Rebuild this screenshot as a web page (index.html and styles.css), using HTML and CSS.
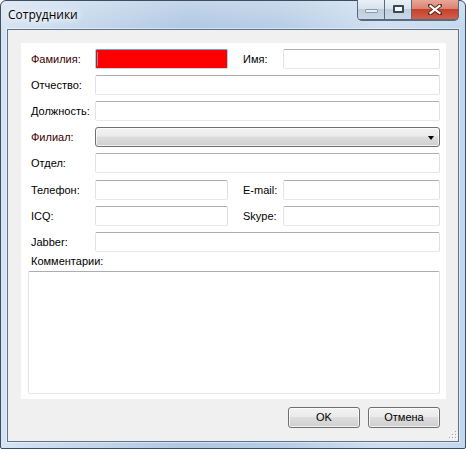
FILE: index.html
```html
<!DOCTYPE html>
<html lang="ru">
<head>
<meta charset="utf-8">
<title>Сотрудники</title>
<link rel="stylesheet" href="styles.css">
</head>
<body>
<div class="window">
  <div class="titlebar">
    <span class="title">Сотрудники</span>
    <div class="caption">
      <span class="cb min"><i class="min-glyph"></i></span>
      <span class="cb max"><i class="max-glyph"></i></span>
      <span class="cb close">
        <svg width="14" height="11" viewBox="0 0 14 11"><path d="M2 1.5 L12 9.5 M12 1.5 L2 9.5" stroke="#5a2a22" stroke-width="4" stroke-linecap="square"/><path d="M2.5 2 L11.5 9 M11.5 2 L2.5 9" stroke="#ffffff" stroke-width="2.2" stroke-linecap="square"/></svg>
      </span>
    </div>
  </div>
  <div class="client">
    <div class="panel">
      <div class="form">
        <span class="lbl req">Фамилия:</span>
        <div class="field focus"><i class="caret"></i></div>
        <span class="lbl2">Имя:</span>
        <div class="field"></div>

        <span class="lbl">Отчество:</span>
        <div class="field full"></div>

        <span class="lbl">Должность:</span>
        <div class="field full"></div>

        <span class="lbl req">Филиал:</span>
        <div class="combo full"><i class="arrow"></i></div>

        <span class="lbl">Отдел:</span>
        <div class="field full"></div>

        <span class="lbl">Телефон:</span>
        <div class="field"></div>
        <span class="lbl2">E-mail:</span>
        <div class="field"></div>

        <span class="lbl">ICQ:</span>
        <div class="field"></div>
        <span class="lbl2">Skype:</span>
        <div class="field"></div>

        <span class="lbl">Jabber:</span>
        <div class="field full"></div>
      </div>
      <div class="comment-label">Комментарии:</div>
      <div class="field comment"></div>
    </div>
    <div class="buttons">
      <button class="btn">OK</button>
      <button class="btn">Отмена</button>
    </div>
    <svg class="grip" width="8" height="8" viewBox="0 0 8 8">
      <rect x="6" y="0" width="1" height="1" fill="#a0a0a0"/>
      <rect x="3" y="3" width="1" height="1" fill="#a0a0a0"/>
      <rect x="6" y="3" width="1" height="1" fill="#a0a0a0"/>
      <rect x="0" y="6" width="1" height="1" fill="#a0a0a0"/>
      <rect x="3" y="6" width="1" height="1" fill="#a0a0a0"/>
      <rect x="6" y="6" width="1" height="1" fill="#a0a0a0"/>
      <rect x="7" y="1" width="1" height="1" fill="#ffffff"/>
      <rect x="4" y="4" width="1" height="1" fill="#ffffff"/>
      <rect x="7" y="4" width="1" height="1" fill="#ffffff"/>
      <rect x="1" y="7" width="1" height="1" fill="#ffffff"/>
      <rect x="4" y="7" width="1" height="1" fill="#ffffff"/>
      <rect x="7" y="7" width="1" height="1" fill="#ffffff"/>
    </svg>
  </div>
</div>
</body>
</html>
```

FILE: styles.css
```css
html, body {
  margin: 0;
  padding: 0;
  background: #ffffff;
}

.window {
  width: 466px;
  height: 449px;
  box-sizing: border-box;
  border: 1px solid #3e4d5f;
  border-radius: 6px 6px 2px 2px;
  padding: 0 6px 6px;
  display: flex;
  flex-direction: column;
  background:
    linear-gradient(180deg, rgba(255,255,255,0.25) 0, rgba(255,255,255,0) 28px),
    linear-gradient(90deg, #d6e4f3 0%, #c8daee 14%, #b0c8e3 40%, #b6cde6 60%, #cfdff1 82%, #c3d7ed 100%);
  font-family: "Liberation Sans", Arial, sans-serif;
  font-size: 11px;
  color: #000;
}

.titlebar {
  height: 28px;
  display: flex;
  align-items: flex-start;
}

.title {
  margin-top: 6px;
  padding-left: 1px;
  font-family: "Open Sans", "Noto Sans", sans-serif;
  font-size: 12px;
  line-height: 16px;
  color: #000;
  text-shadow: 0 0 6px #ffffff, 0 0 10px #ffffff, 0 0 14px rgba(255,255,255,0.9);
}

.caption {
  margin-left: auto;
  margin-top: -1px;
  height: 20px;
  display: flex;
  border: 1px solid #5a6a7e;
  border-top: none;
  border-radius: 0 0 5px 5px;
  overflow: hidden;
  background: #5a6a7e;
  gap: 1px;
}

.cb {
  height: 19px;
  display: flex;
  align-items: center;
  justify-content: center;
}

.min, .max {
  width: 26px;
  background: linear-gradient(180deg, #e9eff6 0%, #d9e3ee 45%, #bfcddc 50%, #c9d7e7 100%);
}

.close {
  width: 46px;
  background: linear-gradient(180deg, #e9a797 0%, #d98471 45%, #c6412c 50%, #d0604a 100%);
}

.min-glyph {
  display: block;
  width: 11px;
  height: 2px;
  margin-top: 3px;
  background: #e8eef5;
  border: 1px solid #8a9aab;
  border-radius: 1px;
}

.max-glyph {
  display: block;
  width: 7px;
  height: 4px;
  margin-top: -2px;
  background: #f4f7fb;
  border: 2px solid #3b4654;
  border-top-width: 2px;
  border-radius: 1px;
}

.client {
  flex: 1;
  position: relative;
  border: 1px solid #60728a;
  background: #f0f0f0;
  display: flex;
  flex-direction: column;
  box-shadow: 0 0 0 1px rgba(255,255,255,0.45);
}

.panel {
  margin: 13px 12px 0 13px;
  height: 356px;
  box-sizing: border-box;
  padding: 6px 0 5px 0;
  background: #ffffff;
}

.form {
  display: grid;
  grid-template-columns: 64px 133px 55px 157px;
  grid-template-rows: 20px 20px 20px 20px 21px 20px 20px 20px;
  row-gap: 6px;
  padding-left: 10px;
  align-items: center;
}

.lbl {
  grid-column: 1;
  white-space: nowrap;
  line-height: 13px;
}

.lbl.req {
  color: #3c0000;
}

.lbl2 {
  padding-left: 15px;
  white-space: nowrap;
  line-height: 13px;
}

.field {
  position: relative;
  height: 20px;
  box-sizing: border-box;
  align-self: start;
  border: 1px solid;
  border-color: #abadb3 #dbdfe6 #e3e9ef #e2e3ea;
  border-radius: 2px;
  background: #ffffff;
}

.full {
  grid-column: 2 / span 3;
}

.field.focus {
  border-color: #6ea6d6 #a9cdea #b8d8f0 #a9cdea;
  background: #ff0000;
}

.caret {
  position: absolute;
  left: 1px;
  top: 2px;
  width: 1px;
  height: 14px;
  background: #5aa0cf;
}

.combo {
  position: relative;
  height: 20px;
  align-self: start;
  box-sizing: border-box;
  border: 1px solid #707070;
  border-radius: 3px;
  background: linear-gradient(180deg, #f2f2f2 0%, #ebebeb 45%, #dddddd 50%, #cfcfcf 100%);
  box-shadow: inset 0 0 0 1px rgba(255,255,255,0.7);
}

.arrow {
  position: absolute;
  right: 5px;
  top: 8px;
  width: 0;
  height: 0;
  border-left: 3.5px solid transparent;
  border-right: 3.5px solid transparent;
  border-top: 4px solid #000;
}

.comment-label {
  height: 19px;
  padding-left: 10px;
  display: flex;
  align-items: center;
  line-height: 13px;
}

.comment {
  margin-left: 7px;
  width: 412px;
  height: 123px;
}

.buttons {
  margin-top: 8px;
  padding-right: 18px;
  display: flex;
  justify-content: flex-end;
  gap: 8px;
}

.btn {
  width: 72px;
  height: 21px;
  margin: 0;
  padding: 0;
  box-sizing: border-box;
  border: 1px solid #707070;
  border-radius: 3px;
  background: linear-gradient(180deg, #f2f2f2 0%, #ebebeb 45%, #dddddd 50%, #cfcfcf 100%);
  box-shadow: inset 0 0 0 1px rgba(255,255,255,0.7);
  font-family: "Liberation Sans", Arial, sans-serif;
  font-size: 11px;
  color: #000;
  line-height: 19px;
}

.grip {
  position: absolute;
  right: 1px;
  bottom: 2px;
}
```
